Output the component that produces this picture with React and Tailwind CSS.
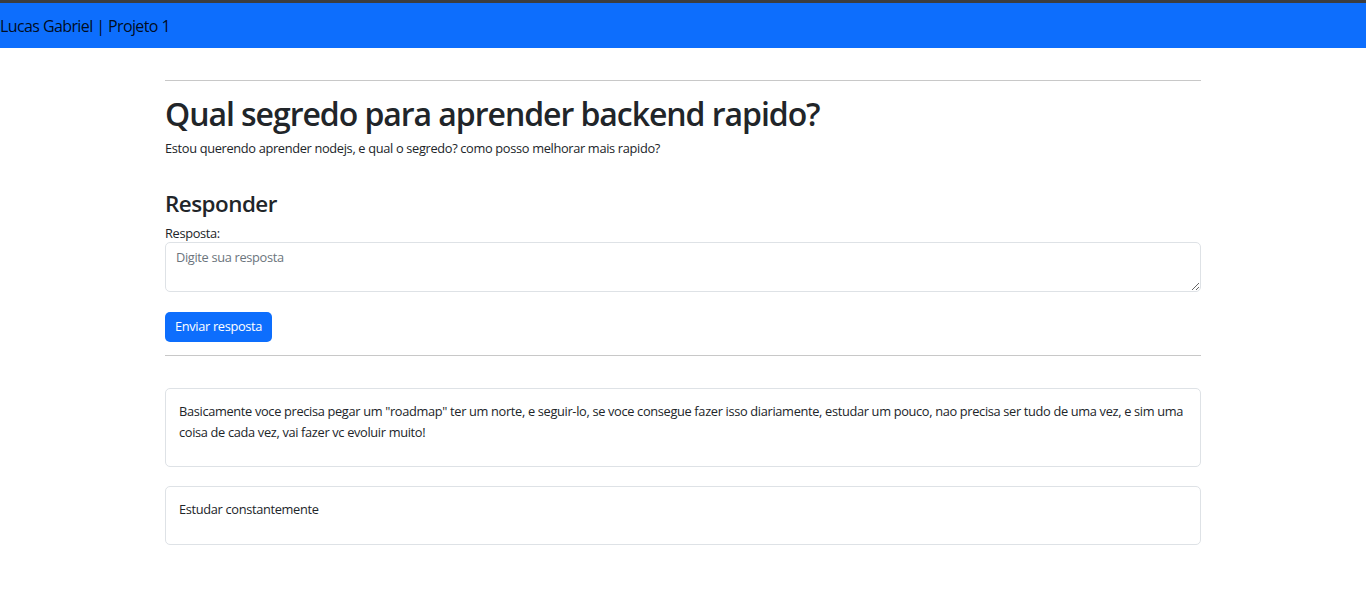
export default function App() {
  const answers = [
    'Basicamente voce precisa pegar um "roadmap" ter um norte, e seguir-lo, se voce consegue fazer isso diariamente, estudar um pouco, nao precisa ser tudo de uma vez, e sim uma coisa de cada vez, vai fazer vc evoluir muito!',
    'Estudar constantemente',
  ]

  return (
    <div className="min-h-screen bg-white text-[#212529] tracking-[-0.33px]" style={{ fontFamily: '"Open Sans", "Noto Sans", sans-serif' }}>
      <div className="h-[3px] bg-[#3b3d40]" />
      <nav className="h-[45px] bg-[#0d6efd] flex items-center">
        <span className="text-[16px] text-black/90 leading-none tracking-[-0.6px]">Lucas Gabriel | Projeto 1</span>
      </nav>

      <main className="w-[1036px] mx-auto pt-[32px]">
        <hr className="border-0 border-t border-[#c8c8c8]" />

        <h1 className="mt-[14px] text-[32px] font-semibold leading-[38px] tracking-[-1.05px]">Qual segredo para aprender backend rapido?</h1>
        <p className="mt-[6px] text-[12.8px] leading-[19px]">Estou querendo aprender nodejs, e qual o segredo? como posso melhorar mais rapido?</p>

        <h3 className="mt-[32px] text-[22.4px] font-semibold leading-[27px] tracking-[-0.5px]">Responder</h3>
        <label className="block mt-[9px] text-[12.8px] leading-[15px]">Resposta:</label>
        <textarea
          placeholder="Digite sua resposta"
          className="block w-full h-[50px] mt-[1px] px-[10px] py-[5px] text-[12.8px] leading-[19px] tracking-[-0.33px] border border-[#dee2e6] rounded-[5px] placeholder:text-[#6c757d] outline-none"
        />
        <button className="mt-[20px] h-[30px] px-[10px] bg-[#0d6efd] text-white text-[12.8px] rounded-[5px] tracking-[-0.33px]">Enviar resposta</button>

        <hr className="mt-[13px] border-0 border-t border-[#c8c8c8]" />

        <div className="mt-[32px] flex flex-col gap-[19px]">
          {answers.map((a, i) => (
            <div key={i} className="min-h-[59px] border border-[#dee2e6] rounded-[5px] px-[13px] pt-[12px] pb-[23px]">
              <p className="text-[12.8px] leading-[21px]">{a}</p>
            </div>
          ))}
        </div>
      </main>
    </div>
  )
}
